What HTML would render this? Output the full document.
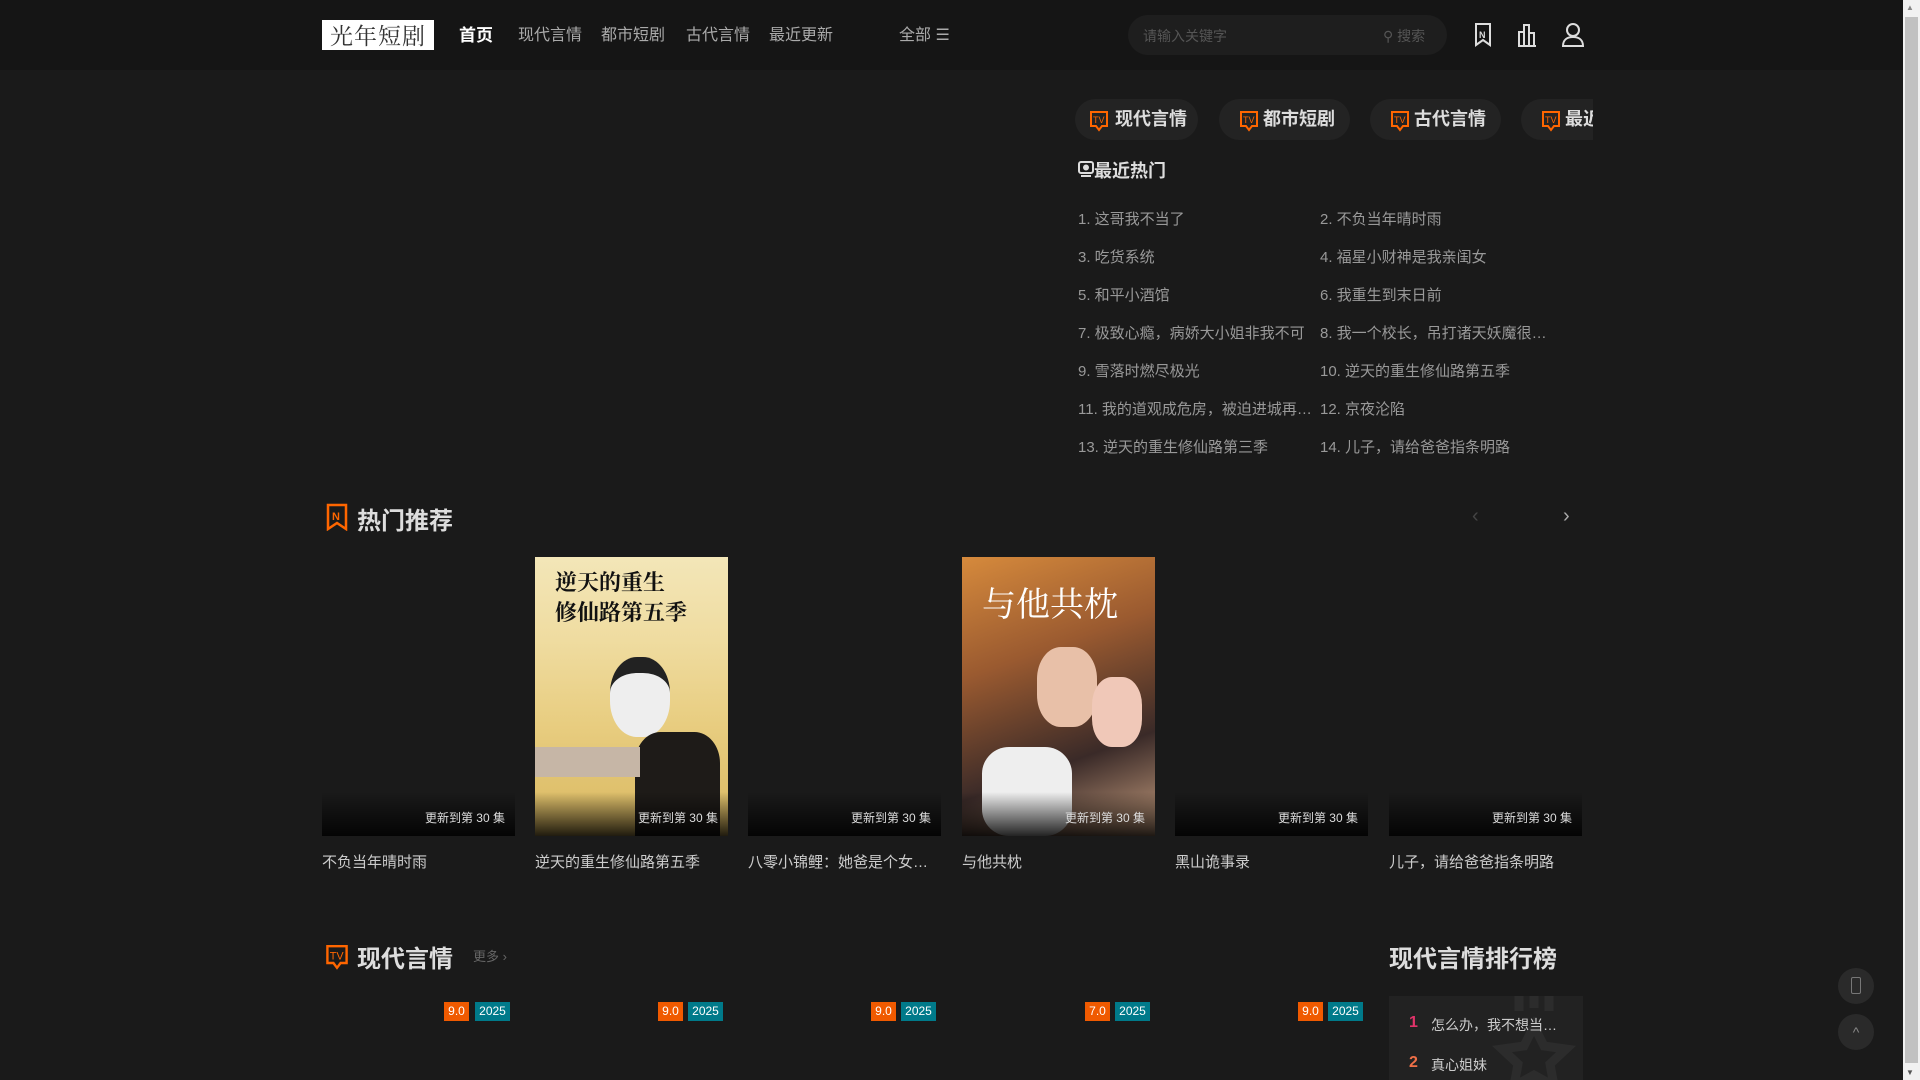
<!DOCTYPE html>
<html><head><meta charset="utf-8"><style>
*{margin:0;padding:0;box-sizing:border-box}
html,body{width:1920px;height:1080px;overflow:hidden;background:#1a1a1a;font-family:"Liberation Sans","Noto Sans CJK SC",sans-serif;color:#ddd}
.abs{position:absolute}
.hdr{left:0;top:0;width:1903px;height:70px;background:#151515}
.logo{left:322px;top:20px;width:112px;height:30px;background:#fff;color:#333;font-family:"Noto Serif CJK SC",serif;font-size:23px;line-height:30px;text-align:center;letter-spacing:1px}
.nav{top:25px;font-size:16px;color:#aaa;line-height:22px}
.search{left:1128px;top:15px;width:319px;height:40px;border-radius:20px;background:#1e1e1e}
.chip{top:99px;height:41px;border-radius:21px;background:#232323;font-size:18px;font-weight:bold;color:#ddd;line-height:41px;padding-left:44px}
.li{font-size:15px;color:#999;line-height:20px;white-space:nowrap}
.card{top:557px;width:193px;height:279px}
.upd{left:0;bottom:0;width:193px;height:44px;background:linear-gradient(rgba(0,0,0,0),rgba(0,0,0,.85));font-size:12px;color:#ddd;text-align:right;padding:17px 10px 0 0}
.ttl{top:851px;font-size:15px;color:#ccc;white-space:nowrap}
.b1{top:1002px;width:25px;height:19px;background:#f05a00;color:#fff;font-size:12px;text-align:center;line-height:19px}
.b2{top:1002px;width:35px;height:19px;background:#007a8a;color:#fff;font-size:12px;text-align:center;line-height:19px}
</style></head><body>
<div class="abs hdr"></div>
<div class="abs logo">光年短剧</div>
<div class="abs nav" style="left:459px;color:#fff;font-weight:bold;font-size:17px">首页</div>
<div class="abs nav" style="left:518px">现代言情</div>
<div class="abs nav" style="left:601px">都市短剧</div>
<div class="abs nav" style="left:686px">古代言情</div>
<div class="abs nav" style="left:769px">最近更新</div>
<div class="abs nav" style="left:899px">全部 ☰</div>
<div class="abs search"></div>
<div class="abs" style="left:1143px;top:26px;font-size:14px;color:#555">请输入关键字</div>
<div class="abs" style="left:1383px;top:26px;font-size:14px;color:#555">⚲ 搜索</div>
<svg class="abs" style="left:1472px;top:22px" width="22" height="26" viewBox="0 0 22 26" fill="none" stroke="#ddd" stroke-width="2"><path d="M4 2h14v21l-7-5-7 5z"/><text x="7" y="16" font-size="9" fill="#ddd" stroke="none" font-family="Liberation Sans" font-weight="bold">N</text></svg>
<svg class="abs" style="left:1516px;top:22px" width="22" height="26" viewBox="0 0 22 26" fill="none" stroke="#ddd" stroke-width="2"><path d="M3 24V10h5v14M8 24V3h5v21M13 24V11h5v13M2 24h18"/></svg>
<svg class="abs" style="left:1561px;top:22px" width="24" height="26" viewBox="0 0 24 26" fill="none" stroke="#ddd" stroke-width="2"><circle cx="12" cy="8" r="6"/><path d="M2 24c0-6 4-9 10-9s10 3 10 9z"/></svg>

<div class="abs" style="left:1075px;top:99px;width:518px;height:41px;overflow:hidden">
<div class="chip abs" style="left:0;top:0;width:123px;padding-left:40px">现代言情</div>
<div class="chip abs" style="left:144px;top:0;width:131px">都市短剧</div>
<div class="chip abs" style="left:295px;top:0;width:131px">古代言情</div>
<div class="chip abs" style="left:446px;top:0;width:131px">最近更新</div>
</div>
<svg class="abs" style="left:1089px;top:110px" width="20" height="22" viewBox="0 0 20 22" fill="none" stroke="#f60" stroke-width="2"><path d="M2 2h16v14h-5l-3 4-3-4H2z"/><text x="4" y="13" font-size="9" fill="#f60" stroke="none" font-family="Liberation Sans">TV</text></svg>
<svg class="abs" style="left:1239px;top:110px" width="20" height="22" viewBox="0 0 20 22" fill="none" stroke="#f60" stroke-width="2"><path d="M2 2h16v14h-5l-3 4-3-4H2z"/><text x="4" y="13" font-size="9" fill="#f60" stroke="none" font-family="Liberation Sans">TV</text></svg>
<svg class="abs" style="left:1390px;top:110px" width="20" height="22" viewBox="0 0 20 22" fill="none" stroke="#f60" stroke-width="2"><path d="M2 2h16v14h-5l-3 4-3-4H2z"/><text x="4" y="13" font-size="9" fill="#f60" stroke="none" font-family="Liberation Sans">TV</text></svg>
<svg class="abs" style="left:1541px;top:110px" width="20" height="22" viewBox="0 0 20 22" fill="none" stroke="#f60" stroke-width="2"><path d="M2 2h16v14h-5l-3 4-3-4H2z"/><text x="4" y="13" font-size="9" fill="#f60" stroke="none" font-family="Liberation Sans">TV</text></svg>

<svg class="abs" style="left:1078px;top:161px" width="16" height="16" viewBox="0 0 16 16" fill="none" stroke="#ddd" stroke-width="2"><rect x="1" y="1" width="14" height="11" rx="2"/><circle cx="8" cy="6.5" r="2" fill="#ddd"/><path d="M3 15h10"/></svg>
<div class="abs" style="left:1094px;top:157px;font-size:18px;font-weight:bold;color:#ddd">最近热门</div>
<div class="abs li" style="left:1078px;top:210px">1. 这哥我不当了</div>
<div class="abs li" style="left:1320px;top:210px">2. 不负当年晴时雨</div>
<div class="abs li" style="left:1078px;top:248px">3. 吃货系统</div>
<div class="abs li" style="left:1320px;top:248px">4. 福星小财神是我亲闺女</div>
<div class="abs li" style="left:1078px;top:286px">5. 和平小酒馆</div>
<div class="abs li" style="left:1320px;top:286px">6. 我重生到末日前</div>
<div class="abs li" style="left:1078px;top:324px">7. 极致心瘾，病娇大小姐非我不可</div>
<div class="abs li" style="left:1320px;top:324px">8. 我一个校长，吊打诸天妖魔很…</div>
<div class="abs li" style="left:1078px;top:362px">9. 雪落时燃尽极光</div>
<div class="abs li" style="left:1320px;top:362px">10. 逆天的重生修仙路第五季</div>
<div class="abs li" style="left:1078px;top:400px">11. 我的道观成危房，被迫进城再…</div>
<div class="abs li" style="left:1320px;top:400px">12. 京夜沦陷</div>
<div class="abs li" style="left:1078px;top:438px">13. 逆天的重生修仙路第三季</div>
<div class="abs li" style="left:1320px;top:438px">14. 儿子，请给爸爸指条明路</div>

<svg class="abs" style="left:325px;top:503px" width="24" height="28" viewBox="0 0 24 28" fill="none" stroke="#f60" stroke-width="2.5"><path d="M3 2h18v24l-9-6-9 6z"/><text x="7" y="17" font-size="11" fill="#f60" stroke="none" font-family="Liberation Sans" font-weight="bold">N</text></svg>
<div class="abs" style="left:357px;top:501px;font-size:24px;font-weight:bold;color:#ddd">热门推荐</div>
<div class="abs" style="left:1472px;top:505px;font-size:20px;color:#444">‹</div>
<div class="abs" style="left:1563px;top:505px;font-size:20px;color:#aaa">›</div>

<div class="abs card" style="left:322px;background:#1a1a1a"><div class="abs upd">更新到第 30 集</div></div>
<div class="abs card" style="left:535px;background:linear-gradient(180deg,#f3e6b8 0%,#efdca0 30%,#e8cd80 60%,#d9b860 100%);overflow:hidden">
 <div class="abs" style="left:20px;top:10px;font-size:22px;font-weight:bold;color:#111;line-height:30px;font-family:'Noto Serif CJK SC',serif">逆天的重生<br>修仙路第五季</div>
 <div class="abs" style="left:75px;top:100px;width:60px;height:80px;background:#eee;border-radius:45%;border-top:16px solid #222"></div>
 <div class="abs" style="left:100px;top:175px;width:85px;height:104px;background:#1e1b18;border-radius:30% 30% 0 0"></div>
 <div class="abs" style="left:0;top:190px;width:105px;height:30px;background:#c6b6a6"></div>
 <div class="abs upd">更新到第 30 集</div></div>
<div class="abs card" style="left:748px;background:#1a1a1a"><div class="abs upd">更新到第 30 集</div></div>
<div class="abs card" style="left:962px;background:linear-gradient(160deg,#d68a3c 0%,#9a5a30 35%,#3a2a28 70%,#c9a080 100%);overflow:hidden">
 <div class="abs" style="left:75px;top:90px;width:60px;height:80px;background:#e8c0a8;border-radius:40%"></div>
 <div class="abs" style="left:130px;top:120px;width:50px;height:70px;background:#f0c8b8;border-radius:40%"></div>
 <div class="abs" style="left:20px;top:190px;width:90px;height:89px;background:#eee;border-radius:30%"></div>
 <div class="abs" style="left:20px;top:20px;font-size:34px;color:#fff;font-family:'Noto Serif CJK SC',serif">与他共枕</div>
 <div class="abs upd">更新到第 30 集</div></div>
<div class="abs card" style="left:1175px;background:#1a1a1a"><div class="abs upd">更新到第 30 集</div></div>
<div class="abs card" style="left:1389px;background:#1a1a1a"><div class="abs upd">更新到第 30 集</div></div>
<div class="abs ttl" style="left:322px">不负当年晴时雨</div>
<div class="abs ttl" style="left:535px">逆天的重生修仙路第五季</div>
<div class="abs ttl" style="left:748px">八零小锦鲤：她爸是个女…</div>
<div class="abs ttl" style="left:962px">与他共枕</div>
<div class="abs ttl" style="left:1175px">黑山诡事录</div>
<div class="abs ttl" style="left:1389px">儿子，请给爸爸指条明路</div>

<svg class="abs" style="left:325px;top:943px" width="24" height="28" viewBox="0 0 20 22" fill="none" stroke="#f60" stroke-width="2"><path d="M2 2h16v14h-5l-3 4-3-4H2z"/><text x="4" y="13" font-size="9" fill="#f60" stroke="none" font-family="Liberation Sans">TV</text></svg>
<div class="abs" style="left:357px;top:939px;font-size:24px;font-weight:bold;color:#ddd">现代言情</div>
<div class="abs" style="left:473px;top:946px;font-size:13px;color:#666">更多 ›</div>
<div class="abs" style="left:1389px;top:939px;font-size:24px;font-weight:bold;color:#ddd">现代言情排行榜</div>

<div class="abs b1" style="left:444px">9.0</div><div class="abs b2" style="left:475px">2025</div>
<div class="abs b1" style="left:658px">9.0</div><div class="abs b2" style="left:688px">2025</div>
<div class="abs b1" style="left:871px">9.0</div><div class="abs b2" style="left:901px">2025</div>
<div class="abs b1" style="left:1085px">7.0</div><div class="abs b2" style="left:1115px">2025</div>
<div class="abs b1" style="left:1298px">9.0</div><div class="abs b2" style="left:1328px">2025</div>

<div class="abs" style="left:1389px;top:996px;width:194px;height:84px;background:#222;overflow:hidden">
 <svg class="abs" style="left:100px;top:0" width="90" height="84" viewBox="0 0 90 84" fill="none" stroke="#2c2c2c" stroke-width="9"><path d="M45 30l10 20 22 3-16 15 4 22-20-11-20 11 4-22-16-15 22-3z"/><path d="M30 0v15M45 0v12M60 0v15"/></svg>
 <div class="abs" style="left:20px;top:18px;font-size:16px;color:#e0336a;font-weight:bold">1</div>
 <div class="abs" style="left:42px;top:19px;font-size:14px;color:#ccc">怎么办，我不想当…</div>
 <div class="abs" style="left:20px;top:58px;font-size:16px;color:#f07048;font-weight:bold">2</div>
 <div class="abs" style="left:42px;top:59px;font-size:14px;color:#ccc">真心姐妹</div>
</div>

<div class="abs" style="left:1838px;top:968px;width:36px;height:36px;border-radius:50%;background:#2a2a2a"></div>
<div class="abs" style="left:1851px;top:977px;width:10px;height:17px;border:1.5px solid #777;border-radius:2px"></div>
<div class="abs" style="left:1838px;top:1014px;width:36px;height:36px;border-radius:50%;background:#2a2a2a;color:#888;text-align:center;line-height:36px;font-size:14px">^</div>

<div class="abs" style="left:1903px;top:0;width:17px;height:1080px;background:#f1f1f1"></div>
<div class="abs" style="left:1905px;top:17px;width:13px;height:1046px;background:#c1c1c1"></div>
<div class="abs" style="left:1906px;top:3px;font-size:8px;color:#888">▲</div>
<div class="abs" style="left:1906px;top:1068px;font-size:8px;color:#555">▼</div>
</body></html>
